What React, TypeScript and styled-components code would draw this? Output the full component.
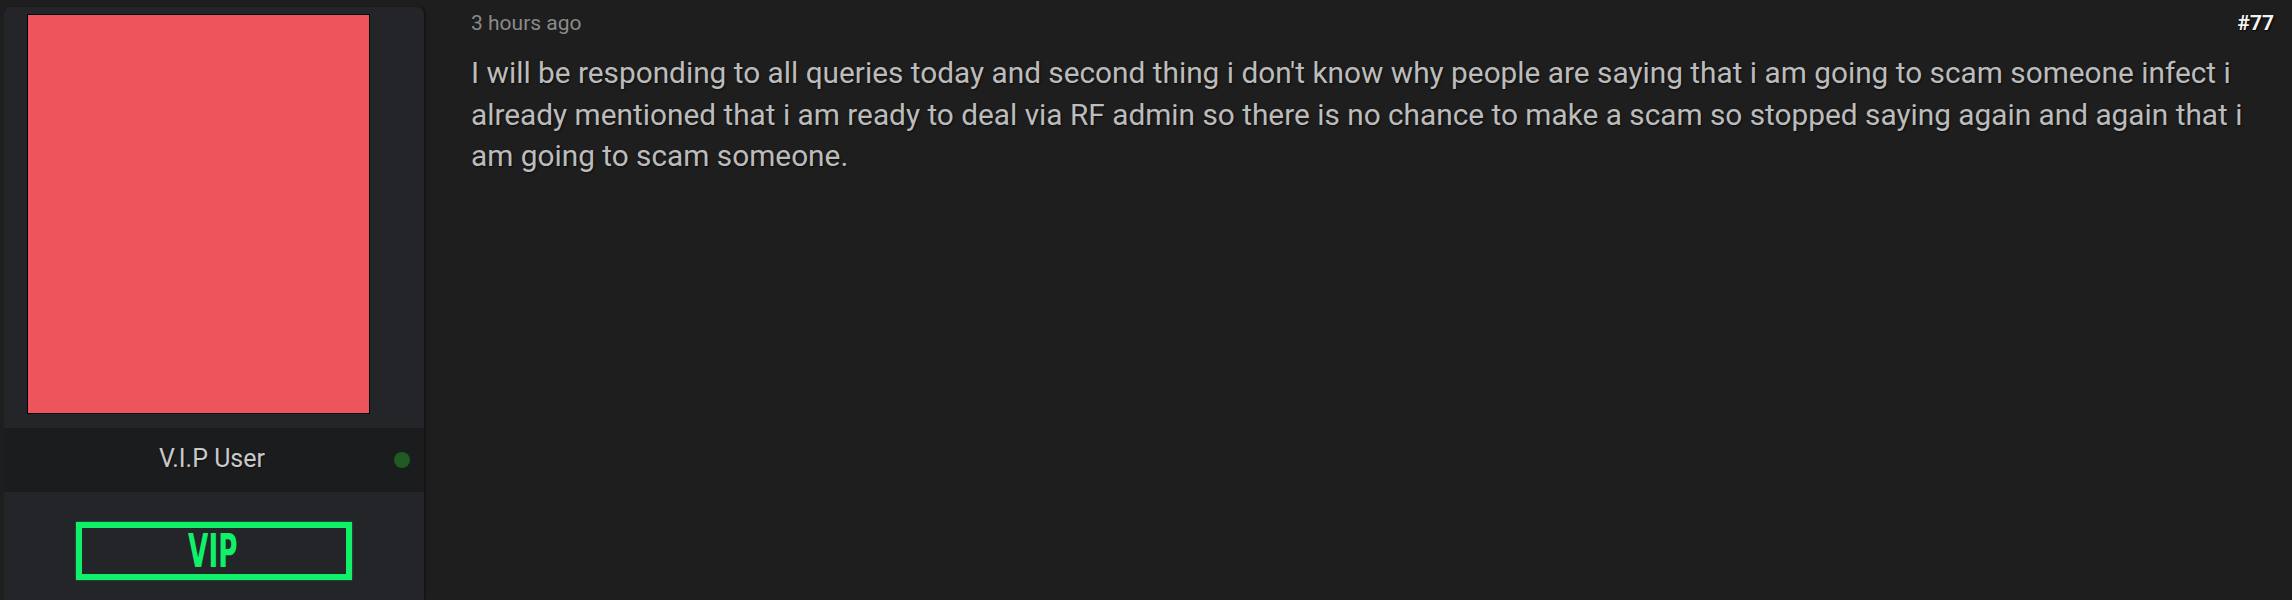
import React from "react";
import styled, { createGlobalStyle } from "styled-components";

const Global = createGlobalStyle`
  html, body { margin: 0; padding: 0; background: #1e1e1e; }
  body { font-family: Roboto, "Noto Sans", Arial, sans-serif; }
`;

const Page = styled.div`
  display: flex;
  align-items: stretch;
  min-height: 600px;
  padding: 7px 0 0 4px;
  box-sizing: border-box;
`;

const Sidebar = styled.aside`
  width: 420px;
  flex: none;
  background: #242528;
  border-radius: 7px 7px 0 0;
  box-shadow: 2px 0 2px rgba(0, 0, 0, 0.35);
  display: flex;
  flex-direction: column;
`;

const AvatarWrap = styled.div`
  padding: 7px 0 14px 23px;
`;

const Avatar = styled.div`
  width: 341px;
  height: 398px;
  background: #ed545b;
  border: 1px solid #000;
`;

const NameBar = styled.div`
  position: relative;
  height: 64px;
  background: #1b1c1e;
  display: flex;
  align-items: center;
  justify-content: center;
  color: #c9c9c9;
  font-size: 25px;
  text-shadow: 1px 1px 2px rgba(0, 0, 0, 0.5);
  padding: 0 4px 4px 0;
  box-sizing: border-box;
`;

const OnlineDot = styled.span`
  position: absolute;
  right: 14px;
  top: 50%;
  width: 16px;
  height: 16px;
  margin-top: -8px;
  border-radius: 50%;
  background: #1f5b23;
`;

const BadgeArea = styled.div`
  padding: 30px 0 0 72px;
`;

const Badge = styled.div`
  width: 276px;
  height: 58px;
  box-sizing: border-box;
  border: 6px solid #10f068;
  display: flex;
  align-items: center;
  justify-content: center;
  box-shadow: 0 0 2px rgba(16, 240, 104, 0.5);
`;

const BadgeText = styled.span`
  display: inline-block;
  font-family: "Liberation Sans Narrow", "DejaVu Sans Condensed", sans-serif;
  font-weight: 700;
  font-size: 47px;
  line-height: 1;
  color: #10f068;
  transform: scaleX(0.62);
  margin: -2px 0 0 -2px;
`;

const Content = styled.main`
  flex: 1;
  padding: 1px 18px 0 47px;
  min-width: 0;
`;

const Header = styled.div`
  display: flex;
  justify-content: space-between;
  align-items: center;
  height: 30px;
`;

const Time = styled.span`
  color: #8a8a8a;
  font-size: 21px;
`;

const PostNo = styled.span`
  color: #f2f2f2;
  font-weight: 700;
  font-size: 21px;
  text-shadow: 1px 1px 2px #000;
`;

const Body = styled.p`
  margin: 14px 0 0;
  color: #bcbcbc;
  font-size: 29.8px;
  line-height: 41.5px;
  text-shadow: 1px 1px 2px rgba(0, 0, 0, 0.6);
`;

export default function App() {
  return (
    <>
      <Global />
      <Page>
        <Sidebar>
          <AvatarWrap>
            <Avatar />
          </AvatarWrap>
          <NameBar>
            V.I.P User
            <OnlineDot />
          </NameBar>
          <BadgeArea>
            <Badge>
              <BadgeText>VIP</BadgeText>
            </Badge>
          </BadgeArea>
        </Sidebar>
        <Content>
          <Header>
            <Time>3 hours ago</Time>
            <PostNo>#77</PostNo>
          </Header>
          <Body>
            I will be responding to all queries today and second thing i don't know why people are
            saying that i am going to scam someone infect i already mentioned that i am ready to
            deal via RF admin so there is no chance to make a scam so stopped saying again and again
            that i am going to scam someone.
          </Body>
        </Content>
      </Page>
    </>
  );
}
